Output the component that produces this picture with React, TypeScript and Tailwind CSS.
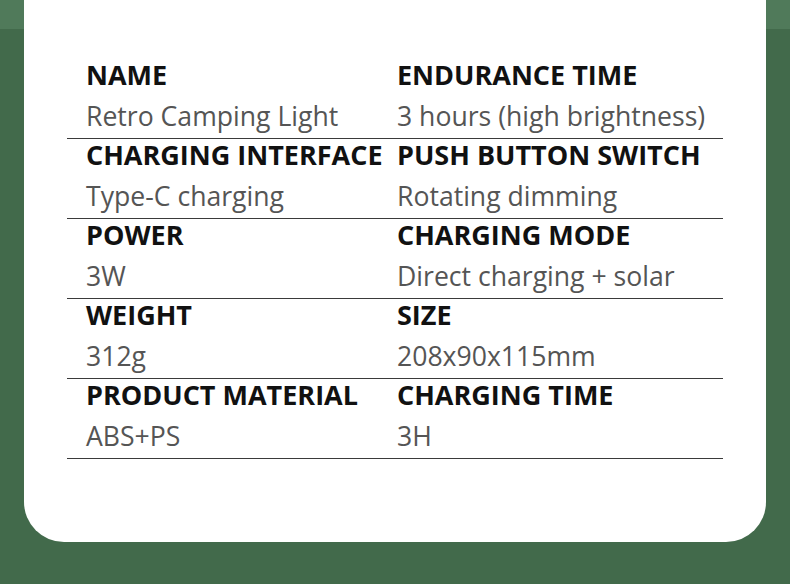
import React from "react";

const rows: [string, string, string, string][] = [
  ["NAME", "Retro Camping Light", "ENDURANCE TIME", "3 hours (high brightness)"],
  ["CHARGING INTERFACE", "Type-C charging", "PUSH BUTTON SWITCH", "Rotating dimming"],
  ["POWER", "3W", "CHARGING MODE", "Direct charging + solar"],
  ["WEIGHT", "312g", "SIZE", "208x90x115mm"],
  ["PRODUCT MATERIAL", "ABS+PS", "CHARGING TIME", "3H"],
];

export default function App() {
  return (
    <div
      className="relative w-[790px] h-[584px] overflow-hidden bg-[#426a4b]"
      style={{ fontFamily: '"Open Sans", "Noto Sans", sans-serif' }}
    >
      <div className="h-[29px] bg-[#507a5a]" />
      <div className="absolute left-[24px] top-0 w-[742px] h-[542px] bg-white rounded-b-[40px] pt-[59px] pl-[43px]">
        <div className="w-[656px]">
          {rows.map((r, i) => (
            <div key={i} className="grid grid-cols-[330px_1fr] border-b border-[#3a3a3a] h-[80px] pt-[1px]">
              <div className="pl-[19px]">
                <div className="h-[30px] leading-[30px] text-[27px] font-bold text-[#111111] whitespace-nowrap">
                  {r[0]}
                </div>
                <div className="mt-[6px] h-[40px] leading-[40px] text-[26.6px] text-[#555555] whitespace-nowrap">
                  {r[1]}
                </div>
              </div>
              <div>
                <div className="h-[30px] leading-[30px] text-[27px] font-bold text-[#111111] whitespace-nowrap">
                  {r[2]}
                </div>
                <div className="mt-[6px] h-[40px] leading-[40px] text-[26.6px] text-[#555555] whitespace-nowrap">
                  {r[3]}
                </div>
              </div>
            </div>
          ))}
        </div>
      </div>
    </div>
  );
}
